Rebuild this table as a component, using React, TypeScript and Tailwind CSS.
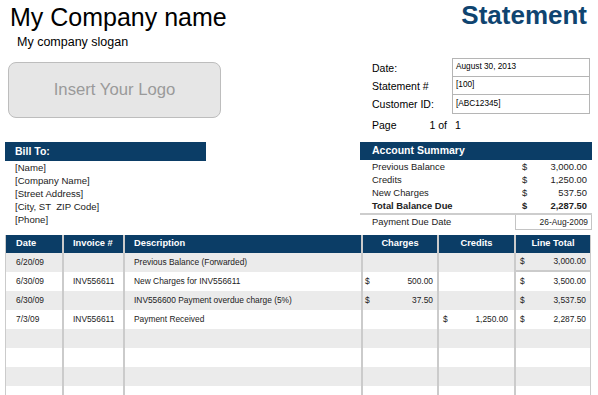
import React from "react";

type Line = {
  date: string;
  invoice: string;
  description: string;
  charge: string;
  credit: string;
  total: string;
};

const lines: Line[] = [
  { date: "6/20/09", invoice: "", description: "Previous Balance (Forwarded)", charge: "", credit: "", total: "3,000.00" },
  { date: "6/30/09", invoice: "INV556611", description: "New Charges for INV556611", charge: "500.00", credit: "", total: "3,500.00" },
  { date: "6/30/09", invoice: "", description: "INV556600 Payment overdue charge (5%)", charge: "37.50", credit: "", total: "3,537.50" },
  { date: "7/3/09", invoice: "INV556611", description: "Payment Received", charge: "", credit: "1,250.00", total: "2,287.50" },
  { date: "", invoice: "", description: "", charge: "", credit: "", total: "" },
  { date: "", invoice: "", description: "", charge: "", credit: "", total: "" },
  { date: "", invoice: "", description: "", charge: "", credit: "", total: "" },
  { date: "", invoice: "", description: "", charge: "", credit: "", total: "" },
];

const summary = [
  { label: "Previous Balance", amount: "3,000.00" },
  { label: "Credits", amount: "1,250.00" },
  { label: "New Charges", amount: "537.50" },
];

const billTo = ["[Name]", "[Company Name]", "[Street Address]", "[City, ST  ZIP Code]", "[Phone]"];

const info = [
  { label: "Date:", value: "August 30, 2013" },
  { label: "Statement #", value: "[100]" },
  { label: "Customer ID:", value: "[ABC12345]" },
];

function Money({ value, className = "" }: { value: string; className?: string }) {
  if (!value) return null;
  return (
    <div className={`flex min-w-0 flex-1 justify-between ${className}`}>
      <span>$</span>
      <span>{value}</span>
    </div>
  );
}

export default function App() {
  return (
    <div className="h-[395px] w-[598px] overflow-hidden bg-white font-['Liberation_Sans',Arial,sans-serif] text-[#1f1f1f]">
      {/* heading */}
      <div className="flex h-[30px] items-start justify-between pl-[10px] pr-[11px] pt-[2px]">
        <div className="mt-[3px] text-[25px] leading-[25px] text-black">My Company name</div>
        <div className="text-[26px] font-bold leading-[26px] text-[#0f4470]">Statement</div>
      </div>
      <div className="mt-[6px] h-[13px] pl-[17px] text-[12.5px] leading-[13px] text-black">My company slogan</div>

      {/* logo + statement info */}
      <div className="flex h-[93px]">
        <div className="w-[360px] pl-[8px] pt-[13px]">
          <div className="flex h-[56px] w-[213px] items-center justify-center rounded-[8px] border border-[#bdbdbd] bg-[#e6e6e6] text-[16.7px] text-[#9a9a9a]">
            Insert Your Logo
          </div>
        </div>
        <div className="w-[232px] pl-[12px] pt-[9px] text-[10.5px] text-black">
          <div className="grid grid-cols-[80px_138px]">
            <div className="flex flex-col">
              {info.map((r) => (
                <div key={r.label} className="flex h-[18px] items-center pt-[4px]">
                  {r.label}
                </div>
              ))}
            </div>
            <div className="border border-[#b5b5b5] text-[8.25px]">
              {info.map((r, i) => (
                <div
                  key={r.label}
                  className={`flex h-[18px] items-center pl-[3px] ${i < 2 ? "border-b border-[#b5b5b5]" : "h-[17px]"}`}
                >
                  {r.value}
                </div>
              ))}
            </div>
          </div>
          <div className="mt-[5px] flex h-[13px] items-center leading-[13px]">
            <span className="w-[40px]">Page</span>
            <span className="w-[35px] text-right">1 of</span>
            <span className="ml-[8px]">1</span>
          </div>
        </div>
      </div>

      {/* bill to + account summary */}
      <div className="flex h-[93px]">
        <div className="w-[360px] pl-[5px]">
          <div className="flex h-[19px] w-[201px] items-center bg-[#0b3d66] pl-[10px] text-[10.5px] font-bold text-white">
            Bill To:
          </div>
          <div className="pl-[10px] text-[9.6px] leading-[13px] text-[#222]">
            {billTo.map((t) => (
              <div key={t} className="whitespace-pre">
                {t}
              </div>
            ))}
          </div>
        </div>
        <div className="w-[232px] text-[9.4px] text-[#222]">
          <div className="flex h-[18px] items-center bg-[#0b3d66] pl-[12px] text-[10.5px] font-bold text-white">
            Account Summary
          </div>
          <div className="border-b-2 border-[#cdcdcd] pt-[1px]">
            {summary.map((r) => (
              <div key={r.label} className="flex h-[13px] items-center pl-[12px] pr-[5px]">
                <span className="w-[150px] shrink-0">{r.label}</span>
                <Money value={r.amount} />
              </div>
            ))}
            <div className="flex h-[13px] items-center pl-[12px] pr-[5px] font-bold">
              <span className="w-[150px] shrink-0">Total Balance Due</span>
              <Money value="2,287.50" />
            </div>
          </div>
          <div className="flex h-[15px] items-center pl-[12px]">
            <span className="w-[143px] shrink-0">Payment Due Date</span>
            <div className="flex h-[15px] flex-1 items-center justify-end border border-t-0 border-[#c4c4c4] pr-[3px] text-[8.4px]">
              26-Aug-2009
            </div>
          </div>
        </div>
      </div>

      {/* activity table */}
      <div className="ml-[5px] w-[586px]">
        <div className="grid h-[18px] grid-cols-[57px_61px_238px_76px_77px_77px] bg-[#0b3d66] text-[9.3px] font-bold text-white">
          <div className="flex items-center border-l border-[#cbcbcb] pl-[10px]">Date</div>
          <div className="flex items-center border-l-2 border-[#cbcbcb] pl-[9px]">Invoice #</div>
          <div className="flex items-center border-l-2 border-[#cbcbcb] pl-[9px]">Description</div>
          <div className="flex items-center justify-center border-l-2 border-[#cbcbcb]">Charges</div>
          <div className="flex items-center justify-center border-l-2 border-[#cbcbcb]">Credits</div>
          <div className="flex items-center justify-center border-l-2 border-r border-[#cbcbcb]">Line Total</div>
        </div>
        {lines.map((l, i) => (
          <div
            key={i}
            className={`grid h-[19px] grid-cols-[57px_61px_238px_76px_77px_77px] text-[8.4px] text-[#222] ${
              i % 2 === 0 ? "bg-[#ebebeb]" : "bg-white"
            }`}
          >
            <div className="flex items-center border-l border-[#cbcbcb] pl-[10px]">{l.date}</div>
            <div className="flex items-center border-l-2 border-[#cbcbcb] pl-[9px]">{l.invoice}</div>
            <div className="flex items-center border-l-2 border-[#cbcbcb] pl-[9px]">{l.description}</div>
            <div className="flex items-center border-l-2 border-[#cbcbcb] pl-[2px] pr-[4px]">
              <Money value={l.charge} />
            </div>
            <div className="flex items-center border-l-2 border-[#cbcbcb] pl-[4px] pr-[6px]">
              <Money value={l.credit} />
            </div>
            <div
              className={`flex items-center border-l-2 border-r border-[#cbcbcb] pl-[4px] pr-[4px] ${
                i === 0 ? "border-b-2" : ""
              }`}
            >
              <Money value={l.total} />
            </div>
          </div>
        ))}
      </div>
    </div>
  );
}
